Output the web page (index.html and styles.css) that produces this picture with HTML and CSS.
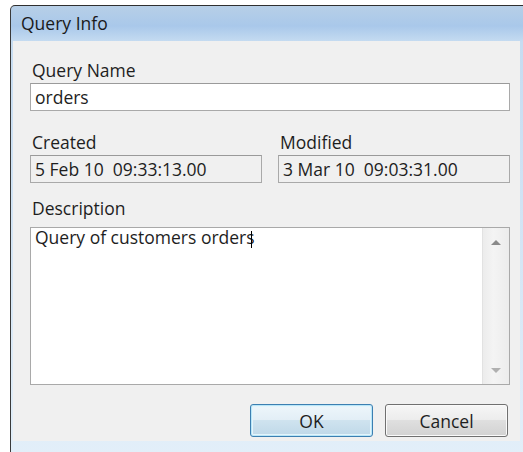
FILE: index.html
```html
<!DOCTYPE html>
<html lang="en">
<head>
<meta charset="utf-8">
<title>Query Info</title>
<link rel="stylesheet" href="styles.css">
</head>
<body>
<div class="window">
  <div class="titlebar">Query Info</div>
  <div class="client">
    <div class="field-label">Query Name</div>
    <div class="textbox">orders</div>

    <div class="dates">
      <div class="date-col">
        <div class="field-label label-created">Created</div>
        <div class="textbox readonly">5 Feb 10&nbsp; 09:33:13.00</div>
      </div>
      <div class="date-col">
        <div class="field-label label-created">Modified</div>
        <div class="textbox readonly">3 Mar 10&nbsp; 09:03:31.00</div>
      </div>
    </div>

    <div class="field-label label-desc">Description</div>
    <div class="memo">
      <div class="memo-text">Query of customers orders<span class="caret"></span></div>
      <div class="scrollbar">
        <svg class="arrow" width="10" height="6" viewBox="0 0 10 6"><path d="M0 6 L5 1 L10 6 Z" fill="#8a8a8a"/></svg>
        <svg class="arrow" width="10" height="6" viewBox="0 0 10 6"><path d="M0 0 L5 5 L10 0 Z" fill="#b0b0b0"/></svg>
      </div>
    </div>

    <div class="buttons">
      <button class="btn btn-default">OK</button>
      <button class="btn">Cancel</button>
    </div>
  </div>
</div>
</body>
</html>
```
FILE: styles.css
```css
html, body {
  margin: 0;
  padding: 0;
  background: #ffffff;
}

body {
  font-family: "Open Sans", "Noto Sans", sans-serif;
  font-size: 17.5px;
  color: #1e1e1e;
  overflow: hidden;
}

.window {
  margin: 5px 0 0 10px;
  width: 513px;
  box-sizing: border-box;
  border-top: 1px solid #2f2f2f;
  border-left: 1px solid #3a3a3a;
  border-top-left-radius: 5px;
  padding: 0 3px 0 2px;
  background: linear-gradient(to bottom, #b7cfe7 0px, #a9c8ea 20px, #c6dcf1 36px, #e3eff9 100%);
  height: 460px;
}

.titlebar {
  height: 35px;
  line-height: 35px;
  padding-left: 8px;
  font-size: 17.5px;
  color: #1a1a1a;
}

.client {
  background: #f0f0f0;
  padding: 19px 10px 4px 17px;
}

.field-label {
  line-height: 20px;
  padding-left: 2px;
  margin-bottom: 3px;
}

.label-created {
  margin-top: 21px;
  margin-bottom: 3px;
}

.label-desc {
  margin-top: 15px;
  margin-bottom: 9px;
}

.textbox {
  height: 28px;
  box-sizing: border-box;
  border: 1px solid #a9a9a9;
  border-top-color: #9a9a9a;
  background: #ffffff;
  padding: 0 4px;
  line-height: 26px;
  white-space: pre;
}

.textbox.readonly {
  background: #f0f0f0;
}

.dates {
  display: grid;
  grid-template-columns: 232px 232px;
  column-gap: 16px;
}

.memo {
  height: 158px;
  box-sizing: border-box;
  border: 1px solid #a9a9a9;
  background: #ffffff;
  display: flex;
}

.memo-text {
  flex: 1;
  padding: 0 4px;
  line-height: 16px;
  padding-top: 1px;
}

.caret {
  display: inline-block;
  width: 1px;
  height: 17px;
  background: #000;
  vertical-align: -4px;
  margin-left: -4px;
}

.scrollbar {
  width: 26px;
  background: linear-gradient(to right, #ececec, #f4f4f4 40%, #ececec);
  border-left: 1px solid #e2e2e2;
  display: flex;
  flex-direction: column;
  justify-content: space-between;
  align-items: center;
  padding: 11px 0 10px;
}

.arrow {
  display: block;
}

.buttons {
  display: flex;
  justify-content: flex-end;
  gap: 12px;
  margin-top: 19px;
  padding-right: 2px;
}

.btn {
  width: 123px;
  height: 33px;
  box-sizing: border-box;
  font-family: inherit;
  font-size: 17.5px;
  color: #1e1e1e;
  border: 1px solid #707070;
  border-radius: 3px;
  background: linear-gradient(to bottom, #f6f6f6 0%, #ececec 49%, #dfdfdf 50%, #d2d2d2 100%);
  box-shadow: inset 0 0 0 1px #fafafa;
  padding: 0;
}

.btn-default {
  border-color: #3c7fb1;
  box-shadow: inset 0 0 0 1px #b9e6f8, inset 0 0 0 2px #e4f4fb;
  background: linear-gradient(to bottom, #eef6fb 0%, #e2eef6 49%, #cfe3ef 50%, #bfd8e8 100%);
}
```
